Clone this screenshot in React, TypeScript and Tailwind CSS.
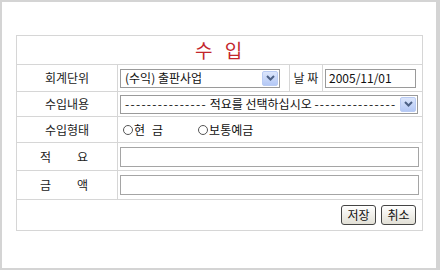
import React from 'react';

const font = { fontFamily: '"Noto Sans CJK KR", "Noto Sans", sans-serif' };

const Chevron = () => (
  <span className="flex h-[15px] w-[16px] items-center justify-center rounded-[2px] border border-[#b9cbf3] bg-gradient-to-b from-[#dce6fc] to-[#b4c8f5]">
    <svg width="9" height="6" viewBox="0 0 9 6">
      <path d="M1 1 L4.5 4.5 L8 1" fill="none" stroke="#4d6185" strokeWidth="2" />
    </svg>
  </span>
);

const Select = ({ text, className }: { text: React.ReactNode; className: string }) => (
  <div className={`flex items-center justify-between border border-[#9a9a9a] bg-white pl-[4px] pr-[1px] ${className}`}>
    <span className="whitespace-nowrap text-[12px] leading-[16px] text-[#111]">{text}</span>
    <Chevron />
  </div>
);

const Radio = ({ children }: { children: React.ReactNode }) => (
  <span className="flex items-center gap-[1px] text-[12px] text-[#111]">
    <span className="h-[10px] w-[10px] rounded-full border border-[#555] bg-white" />
    {children}
  </span>
);

const Button = ({ label }: { label: string }) => (
  <button className="h-[20px] w-[35px] rounded-[3px] border border-[#444] bg-gradient-to-b from-white to-[#e2e0d6] text-[12px] leading-none text-[#111]">
    {label}
  </button>
);

const Label = ({ children }: { children: React.ReactNode }) => (
  <div className="flex items-center justify-center border-r border-b border-[#d6d6d6] text-[12px] text-[#222]">
    {children}
  </div>
);

const Dashes = () => <span className="tracking-[1.3px]">---------------</span>;

export default function App() {
  return (
    <div
      className="h-[270px] w-[440px] border-t-2 border-r-4 border-b-2 border-l-2 border-[#d4d4d4] bg-white pt-[33px] pl-[14px]"
      style={font}
    >
      <div className="grid w-[407px] grid-cols-[101px_172px_33px_100px] grid-rows-[29px_27px_25px_26px_28px_29px_31px] border-t border-l border-[#d6d6d6]">
        {/* Title */}
        <div className="col-span-4 flex items-center justify-center border-r border-b border-[#d6d6d6] pl-[2px] text-[19px] tracking-[4px] text-[#c3262b]">
          수 입
        </div>

        {/* 회계단위 / 날짜 */}
        <Label>회계단위</Label>
        <div className="flex items-center border-r border-b border-[#d6d6d6] pl-[2px]">
          <Select text="(수익) 출판사업" className="h-[19px] w-[160px]" />
        </div>
        <div className="flex items-center justify-center border-r border-b border-[#d6d6d6] text-[12px] text-[#222]">
          날 짜
        </div>
        <div className="flex items-center border-r border-b border-[#d6d6d6] pl-[2px]">
          <div className="flex h-[19px] w-[91px] items-center border border-[#9a9a9a] pl-[3px] text-[12px] leading-none text-[#111]">
            2005/11/01
          </div>
        </div>

        {/* 수입내용 */}
        <Label>수입내용</Label>
        <div className="col-span-3 flex items-center border-r border-b border-[#d6d6d6] pl-[2px]">
          <Select
            text={
              <>
                <Dashes /> 적요를 선택하십시오 <Dashes />
              </>
            }
            className="h-[19px] w-[298px]"
          />
        </div>

        {/* 수입형태 */}
        <Label>수입형태</Label>
        <div className="col-span-3 flex items-center gap-[35px] border-r border-b border-[#d6d6d6] pl-[5px]">
          <Radio>
            <span className="flex gap-[7px]">
              <span>현</span>
              <span>금</span>
            </span>
          </Radio>
          <Radio>보통예금</Radio>
        </div>

        {/* 적요 */}
        <Label>
          <span className="flex gap-[26px] pr-[6px]">
            <span>적</span>
            <span>요</span>
          </span>
        </Label>
        <div className="col-span-3 flex items-center border-r border-b border-[#d6d6d6] pl-[2px]">
          <div className="h-[20px] w-[299px] border border-[#a5a5a5] bg-white" />
        </div>

        {/* 금액 */}
        <Label>
          <span className="flex gap-[26px] pr-[6px]">
            <span>금</span>
            <span>액</span>
          </span>
        </Label>
        <div className="col-span-3 flex items-center border-r border-b border-[#d6d6d6] pl-[2px]">
          <div className="h-[20px] w-[299px] border border-[#a5a5a5] bg-white" />
        </div>

        {/* Buttons */}
        <div className="col-span-4 flex items-center justify-end gap-[5px] border-r border-b border-[#d6d6d6] pr-[6px]">
          <Button label="저장" />
          <Button label="취소" />
        </div>
      </div>
    </div>
  );
}
